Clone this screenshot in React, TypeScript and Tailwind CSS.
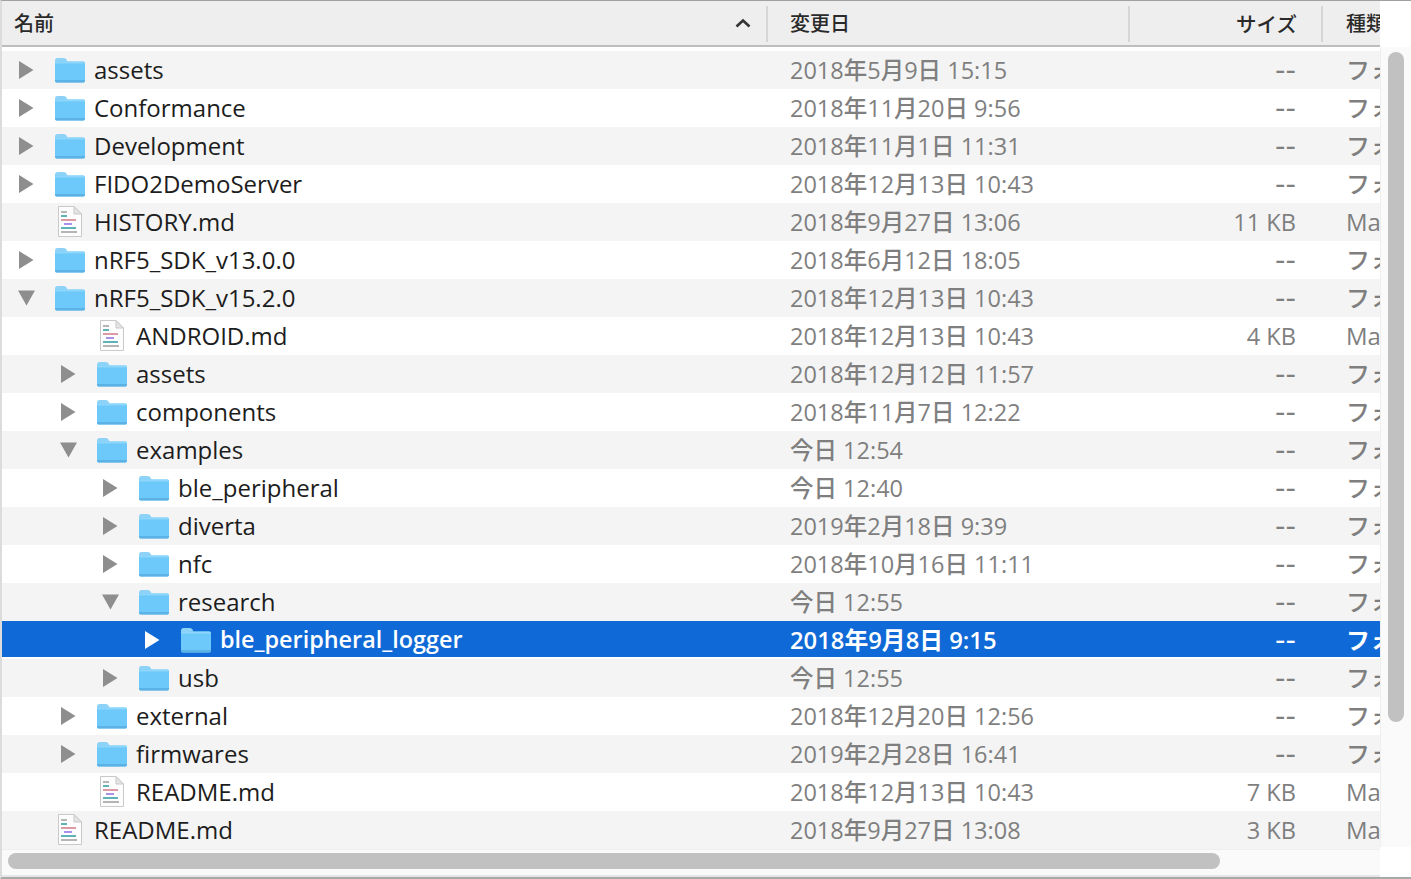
import React from "react";

type Row = { name: string; depth: number; kind: "closed" | "open" | "file"; date: string; size: string; type: string; selected?: boolean };

const F = "フォルダ";
const M = "Markdown";
const rows: Row[] = [
  { name: "assets", depth: 0, kind: "closed", date: "2018年5月9日 15:15", size: "--", type: F },
  { name: "Conformance", depth: 0, kind: "closed", date: "2018年11月20日 9:56", size: "--", type: F },
  { name: "Development", depth: 0, kind: "closed", date: "2018年11月1日 11:31", size: "--", type: F },
  { name: "FIDO2DemoServer", depth: 0, kind: "closed", date: "2018年12月13日 10:43", size: "--", type: F },
  { name: "HISTORY.md", depth: 0, kind: "file", date: "2018年9月27日 13:06", size: "11 KB", type: M },
  { name: "nRF5_SDK_v13.0.0", depth: 0, kind: "closed", date: "2018年6月12日 18:05", size: "--", type: F },
  { name: "nRF5_SDK_v15.2.0", depth: 0, kind: "open", date: "2018年12月13日 10:43", size: "--", type: F },
  { name: "ANDROID.md", depth: 1, kind: "file", date: "2018年12月13日 10:43", size: "4 KB", type: M },
  { name: "assets", depth: 1, kind: "closed", date: "2018年12月12日 11:57", size: "--", type: F },
  { name: "components", depth: 1, kind: "closed", date: "2018年11月7日 12:22", size: "--", type: F },
  { name: "examples", depth: 1, kind: "open", date: "今日 12:54", size: "--", type: F },
  { name: "ble_peripheral", depth: 2, kind: "closed", date: "今日 12:40", size: "--", type: F },
  { name: "diverta", depth: 2, kind: "closed", date: "2019年2月18日 9:39", size: "--", type: F },
  { name: "nfc", depth: 2, kind: "closed", date: "2018年10月16日 11:11", size: "--", type: F },
  { name: "research", depth: 2, kind: "open", date: "今日 12:55", size: "--", type: F },
  { name: "ble_peripheral_logger", depth: 3, kind: "closed", date: "2018年9月8日 9:15", size: "--", type: F, selected: true },
  { name: "usb", depth: 2, kind: "closed", date: "今日 12:55", size: "--", type: F },
  { name: "external", depth: 1, kind: "closed", date: "2018年12月20日 12:56", size: "--", type: F },
  { name: "firmwares", depth: 1, kind: "closed", date: "2019年2月28日 16:41", size: "--", type: F },
  { name: "README.md", depth: 1, kind: "file", date: "2018年12月13日 10:43", size: "7 KB", type: M },
  { name: "README.md", depth: 0, kind: "file", date: "2018年9月27日 13:08", size: "3 KB", type: M },
];

const indent = ["pl-0", "pl-[42px]", "pl-[84px]", "pl-[126px]"];

function Disclosure({ kind, selected }: { kind: Row["kind"]; selected?: boolean }) {
  const fill = selected ? "#ffffff" : "#8e8e8e";
  return (
    <div className="w-[52px] shrink-0 pl-[16px] flex items-center">
      {kind !== "file" && (
        <svg width="18" height="18" viewBox="0 0 18 18">
          {kind === "closed" ? <path d="M1 0 L15.5 9 L1 18 Z" fill={fill} /> : <path d="M0 1.5 L17 1.5 L8.5 16.5 Z" fill={fill} />}
        </svg>
      )}
    </div>
  );
}

function Folder() {
  return (
    <svg width="32" height="26" viewBox="0 0 32 26" className="shrink-0">
      <path d="M1 4 Q1 1 3.5 1 L10 1 Q11.5 1 12.5 2.5 L13.5 4.5 L1 6 Z" fill="#8ed2f7" />
      <path d="M1 5.5 Q1 4.5 2 4.5 L29.5 4.5 Q31 4.5 31 6 L31 23.5 Q31 25.5 29.5 25.5 L2.5 25.5 Q1 25.5 1 23.5 Z" fill="#6cc9f9" />
      <path d="M1 5.5 Q1 4.5 2 4.5 L29.5 4.5 Q31 4.5 31 6 L31 6.5 L1 6.5 Z" fill="#8ed6fb" />
      <path d="M1 23 L31 23 L31 23.5 Q31 25.5 29.5 25.5 L2.5 25.5 Q1 25.5 1 23.5 Z" fill="#5cb2e4" />
    </svg>
  );
}

function DocIcon() {
  return (
    <svg width="32" height="32" viewBox="0 0 32 32" className="shrink-0">
      <path d="M4.5 0.5 L20 0.5 L27.5 8 L27.5 30.5 L4.5 30.5 Z" fill="#fdfdfd" stroke="#c9c9c9" strokeWidth="1" />
      <path d="M20 0.5 L20 8 L27.5 8 Z" fill="#e4e4e4" stroke="#c9c9c9" strokeWidth="1" />
      <rect x="7" y="5" width="6" height="2" fill="#b5b5b5" />
      <rect x="7" y="9" width="6" height="2" fill="#5fb3b8" />
      <rect x="7" y="13" width="15" height="2" fill="#dd9aa5" />
      <rect x="10" y="17" width="8" height="2" fill="#ab8fe8" />
      <rect x="7" y="21" width="15" height="2" fill="#5fb3b8" />
      <rect x="7" y="25" width="16" height="2" fill="#b5b5b5" />
    </svg>
  );
}

function Sep() {
  return <div className="absolute right-0 top-[5px] h-[36px] w-[2px] bg-[#d6d6d6]" />;
}

export default function App() {
  return (
    <div
      className="w-[1411px] h-[879px] overflow-hidden bg-white flex flex-col border-t border-b-[2px] border-l-[2px] border-t-[#a0a0a0] border-b-[#a8a8a8] border-l-[#dcdcdc]"
      style={{ fontFamily: '"Open Sans", "Noto Sans CJK JP", sans-serif' }}
    >
      <div className="flex flex-1 min-h-0">
        <div className="w-[1378px] shrink-0 flex flex-col overflow-hidden">
          <div className="h-[46px] shrink-0 flex bg-[#eeeeee] border-b-[2px] border-[#bdbdbd] text-[20px] text-[#2a2a2a] overflow-hidden font-medium">
            <div className="relative w-[766px] shrink-0 flex items-center justify-between pl-[12px] pr-[16px] pt-[2px]">
              <span>名前</span>
              <svg width="16" height="10" viewBox="0 0 16 10" className="-translate-x-px -translate-y-[1px]">
                <path d="M1.5 8.5 L8 2.5 L14.5 8.5" fill="none" stroke="#333333" strokeWidth="2.6" />
              </svg>
              <Sep />
            </div>
            <div className="relative w-[362px] shrink-0 flex items-center pl-[22px] pt-[2px]">
              <span>変更日</span>
              <Sep />
            </div>
            <div className="relative w-[193px] shrink-0 flex items-center justify-end pr-[26px] pt-[2px]">
              <span className="text-[20.5px]">サイズ</span>
              <Sep />
            </div>
            <div className="flex-1 flex items-center pl-[23px] pt-[2px] whitespace-nowrap overflow-hidden">
              <span>種類</span>
            </div>
          </div>
          <div className="h-[4px] shrink-0 bg-white" />
          {rows.map((r, i) => (
            <div
              key={i}
              className={
                "h-[38px] shrink-0 flex items-center overflow-hidden font-medium " +
                (r.selected ? "bg-[#0f69d6] text-white border-b-[2px] border-white pt-[2px]" : i % 2 === 0 ? "bg-[#f4f4f4]" : "bg-white")
              }
            >
              <div className={"w-[766px] shrink-0 flex items-center gap-[8px] whitespace-nowrap text-[24px] " + indent[r.depth]}>
                <div className="flex items-center w-[84px] shrink-0">
                  <Disclosure kind={r.kind} selected={r.selected} />
                  {r.kind === "file" ? <DocIcon /> : <Folder />}
                </div>
                <span className={r.selected ? "text-white font-semibold text-[23.4px]" : "text-[#1d1d1d]"}>{r.name}</span>
              </div>
              <div className={"w-[362px] shrink-0 pl-[22px] pt-[2px] whitespace-nowrap " + (r.selected ? "font-semibold text-[23.8px]" : "text-[#7f7f7f] text-[23.5px]")}>{r.date}</div>
              <div className={"w-[193px] shrink-0 pr-[27px] pt-[1px] text-right whitespace-nowrap text-[23.6px] " + (r.selected ? "font-semibold" : "text-[#7f7f7f]")}>
                {r.size === "--" ? (
                  <span className="inline-block translate-y-[1px] text-[29px] leading-none font-normal" style={{ fontFamily: '"DejaVu Sans", sans-serif' }}>--</span>
                ) : (
                  r.size
                )}
              </div>
              <div className={"flex-1 pl-[23px] whitespace-nowrap overflow-hidden text-[24px] " + (r.selected ? "font-semibold" : "text-[#7f7f7f]")}>{r.type}</div>
            </div>
          ))}
          <div className="h-[1px] shrink-0 bg-[#eeeeee]" />
          <div className="flex-1 bg-[#fafafa] flex flex-col pl-[6px] pt-[3px]">
            <div className="w-[1212px] h-[16px] rounded-full bg-[#c1c1c1] shrink-0" />
            <div className="flex-1" />
            <div className="h-[2px] -ml-[6px] bg-[#e6e6e6] shrink-0" />
          </div>
        </div>
        <div className="flex-1 flex flex-col">
          <div className="h-[46px] shrink-0 bg-white" />
          <div className="h-[800px] shrink-0 bg-[#fafafa] border-l border-[#eeeeee] pl-[7px] pt-[5px]">
            <div className="w-[16px] h-[670px] rounded-full bg-[#c1c1c1]" />
          </div>
        </div>
      </div>
    </div>
  );
}
